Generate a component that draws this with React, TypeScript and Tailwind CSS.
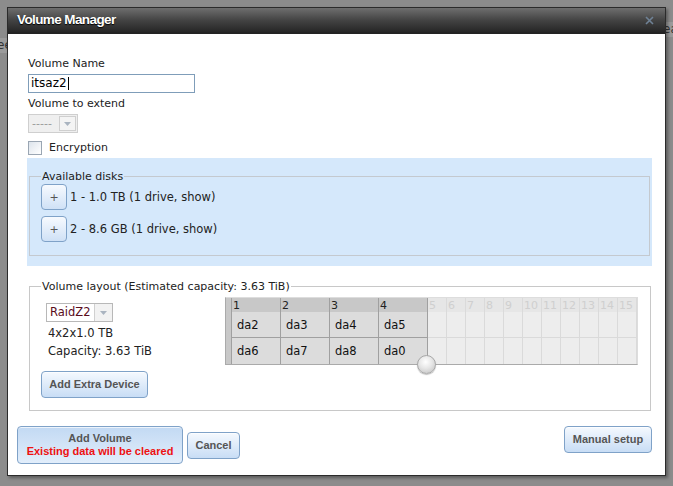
import React from "react";

const FONT = { fontFamily: '"DejaVu Sans", Verdana, sans-serif' };

const ACTIVE_COLS = ["1", "2", "3", "4"];
const IDLE_COLS = ["5", "6", "7", "8", "9", "10", "11", "12", "13", "14", "15"];
const ROWS = [
  ["da2", "da3", "da4", "da5"],
  ["da6", "da7", "da8", "da0"],
];

function BlueButton({
  children,
  className = "",
  hover = false,
}: {
  children: React.ReactNode;
  className?: string;
  hover?: boolean;
}) {
  return (
    <button
      type="button"
      className={`rounded-[4px] border border-[#7fa2c8] font-['Liberation_Sans',Arial,sans-serif] text-[11px] font-bold text-[#555] leading-[13px] shadow-[inset_0_1px_0_rgba(255,255,255,0.7)] ${
        hover
          ? "bg-gradient-to-b from-[#c2d9f3] to-[#e2eefb]"
          : "bg-gradient-to-b from-[#f5f9fe] to-[#c8ddf5]"
      } ${className}`}
    >
      {children}
    </button>
  );
}

function Arrow({ className = "" }: { className?: string }) {
  return (
    <span className={`flex items-center justify-center ${className}`}>
      <svg width="7" height="4" viewBox="0 0 7 4">
        <path d="M0 0h7L3.5 4z" fill="#aab4c0" />
      </svg>
    </span>
  );
}

function DiskGrid() {
  return (
    <div className="relative mt-[3px] flex self-start border border-[#aaa] border-r-[#ddd] border-t-[#ddd]">
      <div className="w-[6px] bg-[#c8c8c8] border-r border-[#a0a0a0]" />
      {ACTIVE_COLS.map((c, i) => (
        <div key={c} className="w-[49px] flex flex-col border-r border-[#a0a0a0]">
          <div className="h-[14px] bg-[#c8c8c8] text-[11px] leading-[15px] text-[#222] pl-[1px]">{c}</div>
          {ROWS.map((r, j) => (
            <div
              key={j}
              className={`h-[26px] bg-[#dcdcdc] pl-[5px] text-[11.5px] leading-[26px] text-[#111] ${
                j === 0 ? "border-b border-[#a0a0a0]" : ""
              }`}
            >
              {r[i]}
            </div>
          ))}
        </div>
      ))}
      {IDLE_COLS.map((c) => (
        <div key={c} className="w-[19px] flex flex-col border-r border-[#dadada] last:border-r-0">
          <div className="h-[14px] bg-[#e6e6e6] text-[11px] leading-[15px] text-[#cfcfcf] pl-[1px]">{c}</div>
          <div className="h-[26px] bg-[#ededed] border-b border-[#dadada]" />
          <div className="h-[26px] bg-[#ededed]" />
        </div>
      ))}
      {/* resize knob */}
      <div className="absolute left-[191px] top-[57px] h-[19px] w-[19px] rounded-full border border-[#a8a8a8] bg-[radial-gradient(circle_at_45%_35%,#ffffff_0%,#e6e6e6_45%,#bdbdbd_100%)] shadow-[0_1px_1px_rgba(0,0,0,0.25)]" />
    </div>
  );
}

export default function App() {
  return (
    <div className="relative h-[486px] w-[673px] overflow-hidden bg-[#8c8c8c]" style={FONT}>
      {/* page behind the modal */}
      <div className="absolute right-0 top-[22px] h-[15px] w-[10px] overflow-hidden bg-[#9b9b9b] text-[12px] leading-[15px] text-[#333]">ea</div>
      <div className="absolute left-0 top-[38px] h-[15px] w-[7px] overflow-hidden bg-[#9b9b9b] text-[12px] leading-[15px] text-[#333]">
        <span className="-ml-[3px]">ee</span>
      </div>

      <div className="absolute left-[7px] top-[7px] flex h-[469px] w-[659px] flex-col border border-[#2b2b2b] bg-white shadow-[2px_2px_3px_rgba(0,0,0,0.35)]">
        {/* title bar */}
        <div className="flex h-[26px] items-center justify-between border-b-2 border-[#232323] bg-gradient-to-b from-[#6f6f6f] via-[#444] to-[#262626] pl-[9px] pr-[11px]">
          <span className="font-['Liberation_Sans',Arial,sans-serif] text-[13.5px] font-bold tracking-[-0.6px] text-white [text-shadow:0_1px_1px_#000]">
            Volume Manager
          </span>
          <svg width="9" height="9" viewBox="0 0 9 9">
            <path d="M1 1l7 7M8 1L1 8" stroke="#6f8296" strokeWidth="1.6" />
          </svg>
        </div>

        {/* body */}
        <div className="flex flex-1 flex-col pl-[20px] pt-[22px] text-[11px] leading-[15px] text-[#222]">
          <div>Volume Name</div>
          <div className="mt-[3px] flex h-[19px] w-[167px] items-center border border-[#7f9db9] px-[2px] text-[12px] text-black">
            itsaz2<span className="ml-[1px] h-[13px] w-px bg-black" />
          </div>
          <div className="mt-[3px]">Volume to extend</div>
          <div className="mt-[3px] flex h-[19px] w-[50px] items-center border border-[#cfcfcf] bg-[#efefef] pl-[3px] text-[#999]">
            <span className="flex-1 leading-[17px]">-----</span>
            <Arrow className="h-[15px] w-[17px] mr-[1px] border border-[#cfcfcf] bg-[#f4f4f4]" />
          </div>
          <div className="mt-[7px] flex h-[15px] items-center">
            <span className="h-[14px] w-[14px] border border-[#9aa6b3] bg-gradient-to-br from-[#dde4ec] to-white" />
            <span className="ml-[7px]">Encryption</span>
          </div>

          {/* available disks */}
          <div className="-ml-[1px] mt-[3px] w-[625px] bg-[#d5e8fb] pb-[10px] pt-[11px]">
            <fieldset className="mx-[2px] border border-[#c4c9cf] pb-[13px]">
              <legend className="ml-[11px] px-[1px] leading-[15px]">Available disks</legend>
              {["1 - 1.0 TB (1 drive, show)", "2 - 8.6 GB (1 drive, show)"].map((t, i) => (
                <div key={t} className={`ml-[11px] flex items-center ${i ? "mt-[6px]" : ""}`}>
                  <button
                    type="button"
                    className="h-[26px] w-[26px] rounded-[4px] border border-[#7fa2c8] bg-gradient-to-b from-[#f7fafe] to-[#cfe1f6] text-[11px] text-[#555]"
                  >
                    +
                  </button>
                  <span className="ml-[3px] text-[11.5px] text-[#222]">{t}</span>
                </div>
              ))}
            </fieldset>
          </div>

          {/* volume layout */}
          <fieldset className="ml-[1px] mt-[13px] w-[622px] border border-[#c8c8c8] pb-[12px]">
            <legend className="ml-[11px] px-[1px] leading-[15px]">Volume layout (Estimated capacity: 3.63 TiB)</legend>
            <div className="flex items-start">
              <div className="ml-[11px] w-[184px] pt-[9px]">
                <div className="ml-[5px] flex h-[19px] w-[67px] items-center border border-[#b8b8b8] bg-white pl-[3px]">
                  <span className="flex-1 text-[11.5px] leading-[17px] text-[#5a0c1c]">RaidZ2</span>
                  <Arrow className="h-[17px] w-[18px] border-l border-[#d0d0d0] bg-[#f2f2f2]" />
                </div>
                <div className="ml-[7px] mt-[4px] text-[11.5px] leading-[15px]">4x2x1.0 TB</div>
                <div className="ml-[7px] mt-[3px] text-[11.5px] leading-[15px]">Capacity: 3.63 TiB</div>
                <BlueButton className="mt-[12px] h-[27px] w-[107px]">Add Extra Device</BlueButton>
              </div>
              <DiskGrid />
            </div>
          </fieldset>

          {/* bottom buttons */}
          <div className="-ml-[11px] mt-[15px] flex w-[635px] items-start">
            <BlueButton hover className="h-[38px] w-[166px]">
              <div>Add Volume</div>
              <div className="text-[#ee1111]">Existing data will be cleared</div>
            </BlueButton>
            <BlueButton className="ml-[4px] mt-[6px] h-[27px] w-[53px]">Cancel</BlueButton>
            <div className="flex-1" />
            <BlueButton className="h-[27px] w-[88px]">Manual setup</BlueButton>
          </div>
        </div>
      </div>
    </div>
  );
}
